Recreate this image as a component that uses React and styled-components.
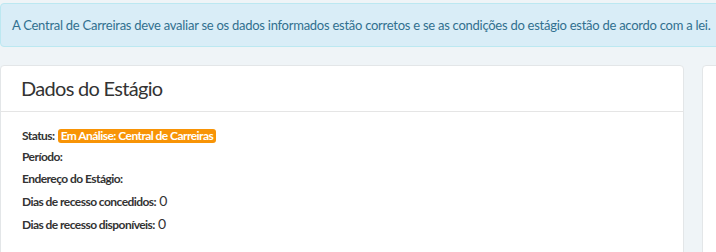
import React from "react";
import styled, { createGlobalStyle } from "styled-components";

const GlobalStyle = createGlobalStyle`
    body {
        margin: 0;
        background: #eff4f7;
        font-family: Lato, "Open Sans", sans-serif;
        color: #333;
        overflow: hidden;
    }
`;

const Page = styled.div`
    width: 740px;
    padding-top: 3px;
`;

const Alert = styled.div`
    background: #d9edf7;
    border: 1px solid #bce8f1;
    border-radius: 4px;
    color: #31708f;
    font-size: 13px;
    letter-spacing: -0.26px;
    line-height: 18px;
    padding: 12px 11px;
    white-space: nowrap;
    margin-bottom: 18px;
`;

const Row = styled.div`
    display: grid;
    grid-template-columns: 684px 1fr;
    gap: 18px;
`;

const Panel = styled.div`
    background: #fff;
    border: 1px solid #e3e6e8;
    border-radius: 4px;
    height: 220px;
`;

const PanelHeader = styled.div`
    padding: 11px 20px 12px;
    border-bottom: 1px solid #e5e5e5;
`;

const Title = styled.h3`
    margin: 0;
    font-size: 20px;
    letter-spacing: -0.7px;
    line-height: 22px;
    font-weight: 400;
    color: #333;
`;

const PanelBody = styled.div`
    padding: 13px 21px 12px;
`;

const Line = styled.div`
    font-size: 12px;
    line-height: 22px;
    &:first-child {
        line-height: 21px;
    }
`;

const Label = styled.strong`
    font-weight: 700;
    letter-spacing: -0.55px;
`;

const Value = styled.span`
    font-size: 14px;
    font-weight: 400;
`;

const Badge = styled.span`
    display: inline-block;
    background: #f89406;
    color: #fff;
    font-weight: 700;
    font-size: 12px;
    letter-spacing: -0.55px;
    line-height: 14px;
    padding: 0 3px;
    border-radius: 3px;
`;

const App = () => {
    return (
        <>
            <GlobalStyle />
            <Page>
                <Alert>
                    A Central de Carreiras deve avaliar se os dados informados estão corretos e se as condições do estágio estão de acordo com a lei.
                </Alert>
                <Row>
                    <Panel>
                        <PanelHeader>
                            <Title>Dados do Estágio</Title>
                        </PanelHeader>
                        <PanelBody>
                            <Line><Label>Status:</Label> <Badge>Em Análise: Central de Carreiras</Badge></Line>
                            <Line><Label>Período:</Label></Line>
                            <Line><Label>Endereço do Estágio:</Label></Line>
                            <Line><Label>Dias de recesso concedidos:</Label> <Value>0</Value></Line>
                            <Line><Label>Dias de recesso disponíveis:</Label> <Value>0</Value></Line>
                        </PanelBody>
                    </Panel>
                    <Panel />
                </Row>
            </Page>
        </>
    );
};

export default App;
